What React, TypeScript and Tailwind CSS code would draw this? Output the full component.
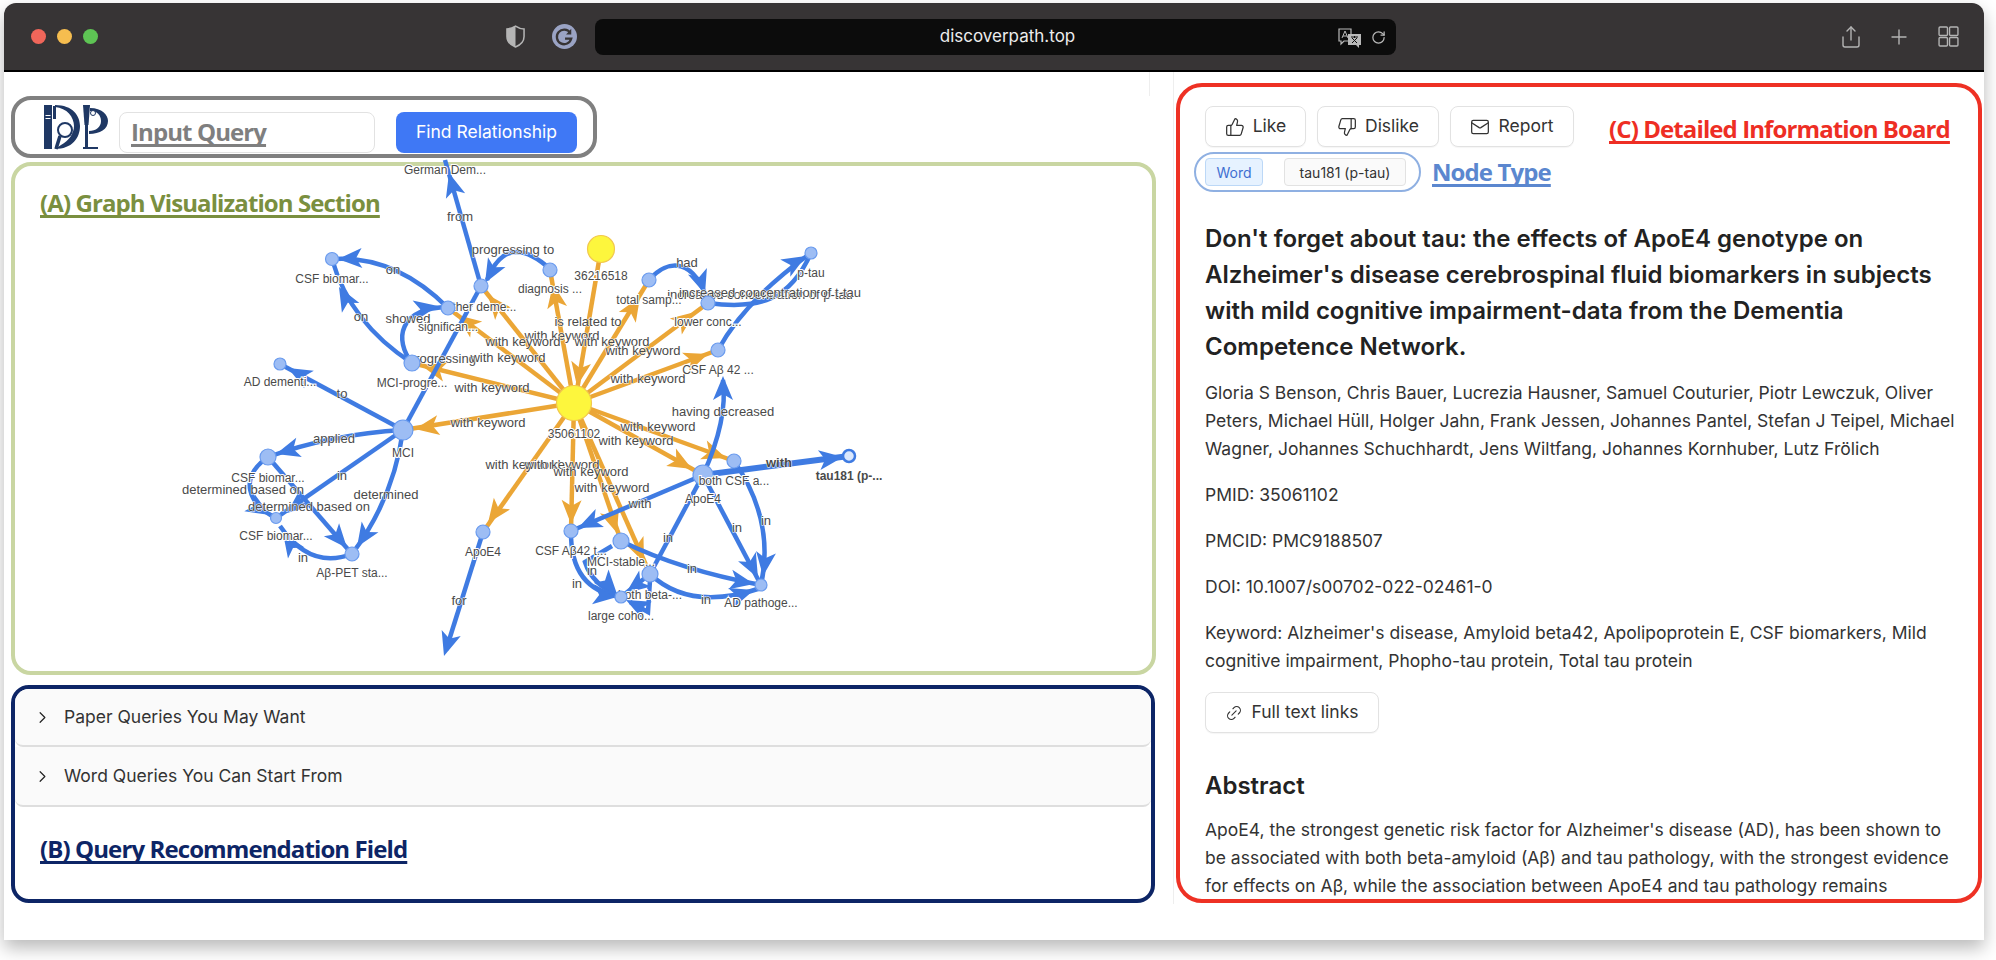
import React from 'react';
import { ChevronRight, Link2, Mail, Plus, RotateCw, Share, ThumbsDown, ThumbsUp } from 'lucide-react';

const BLUE = '#3f7be2';
const ORANGE = '#eba636';

type Pt = [number, number];

interface Edge {
    d: string;
    color: string;
    width?: number;
    // arrow tip and a point behind it, gives the direction
    tip?: Pt;
    from?: Pt;
}

const CENTER: Pt = [574, 403];

// orange "with keyword" spokes around the paper node
const spokes: { to: Pt; tip: Pt }[] = [
    { to: [481, 286], tip: [488, 295] },
    { to: [448, 308], tip: [457, 315] },
    { to: [412, 363], tip: [422, 366] },
    { to: [403, 430], tip: [415, 429] },
    { to: [550, 270], tip: [553, 284] },
    { to: [649, 280], tip: [640, 297] },
    { to: [708, 303], tip: [695, 312] },
    { to: [718, 350], tip: [708, 354] },
    { to: [703, 475], tip: [692, 469] },
    { to: [734, 461], tip: [726, 458] },
    { to: [483, 532], tip: [488, 523] },
    { to: [571, 531], tip: [571, 524] },
    { to: [621, 541], tip: [617, 533] },
    { to: [650, 574], tip: [644, 562] },
];

const edges: Edge[] = [
    ...spokes.map(s => ({ d: `M${CENTER[0]} ${CENTER[1]} L${s.to[0]} ${s.to[1]}`, color: ORANGE, tip: s.tip, from: CENTER })),
    { d: 'M601 249 L577 390', color: ORANGE, tip: [577, 386], from: [601, 249] },

    { d: 'M481 286 L445 160', color: BLUE, tip: [449, 173], from: [481, 286] },
    { d: 'M550 269 Q507 230 487 280', color: BLUE, tip: [485, 283], from: [499, 258] },
    { d: 'M448 308 Q396 256 335 259', color: BLUE, tip: [338, 259], from: [362, 258] },
    { d: 'M412 363 Q350 323 332 259', color: BLUE, tip: [339, 287], from: [349, 305] },
    { d: 'M412 363 C394 340 398 308 448 307', color: BLUE, tip: [438, 306], from: [416, 310] },
    { d: 'M403 430 L481 286', color: BLUE },
    { d: 'M403 430 L280 364', color: BLUE, tip: [288, 368], from: [310, 380] },
    { d: 'M403 430 Q332 434 268 457', color: BLUE, tip: [276, 454], from: [300, 447] },
    { d: 'M403 430 L276 518', color: BLUE, tip: [287, 513], from: [312, 493] },
    { d: 'M403 430 Q394 498 352 554', color: BLUE, tip: [357, 547], from: [370, 527] },
    { d: 'M268 457 L352 554', color: BLUE, tip: [347, 548], from: [330, 528] },
    { d: 'M268 457 C238 478 248 504 276 518', color: BLUE, tip: [270, 515], from: [250, 503] },
    { d: 'M352 554 Q310 570 280 526', color: BLUE, tip: [283, 533], from: [293, 548] },
    { d: 'M483 532 L446 650', color: BLUE, tip: [444, 656], from: [483, 532] },

    { d: 'M718 350 Q745 300 811 253', color: BLUE, tip: [806, 256], from: [782, 270] },
    { d: 'M708 303 C760 310 790 300 811 253', color: BLUE },
    { d: 'M649 280 C668 258 695 258 708 303', color: BLUE, tip: [705, 294], from: [697, 270] },
    { d: 'M703 475 Q728 420 723 380', color: BLUE, tip: [723, 376], from: [723, 394] },
    { d: 'M703 475 L849 456', color: BLUE, width: 6, tip: [843, 457], from: [812, 461] },
    { d: 'M703 475 L571 531', color: BLUE, tip: [578, 528], from: [602, 517] },
    { d: 'M703 475 L650 574', color: BLUE },
    { d: 'M703 475 L761 585', color: BLUE, tip: [758, 578], from: [744, 551] },
    { d: 'M734 461 Q775 520 761 585', color: BLUE, tip: [763, 576], from: [766, 552] },
    { d: 'M621 541 Q680 570 761 585', color: BLUE, tip: [754, 584], from: [728, 579] },
    { d: 'M650 574 Q690 612 761 588', color: BLUE, tip: [754, 590], from: [733, 597] },
    { d: 'M571 531 Q570 590 621 597', color: BLUE, tip: [617, 597], from: [591, 594] },
    { d: 'M612 546 L585 562 Q592 585 621 597', color: BLUE, tip: [617, 594], from: [601, 576] },
    { d: 'M650 574 L621 597', color: BLUE, tip: [626, 593], from: [642, 581] },
    { d: 'M650 580 L648 612 L630 602', color: BLUE, tip: [626, 600], from: [646, 610] },
];

const edgeLabels: [string, number, number, boolean?][] = [
    ['from', 460, 217],
    ['progressing to', 513, 250],
    ['on', 393, 270],
    ['on', 361, 317],
    ['showed', 408, 319],
    ['progressing', 442, 359],
    ['to', 342, 394],
    ['applied', 334, 439],
    ['in', 342, 476],
    ['determined', 386, 495],
    ['determined based on', 243, 490],
    ['determined based on', 309, 507],
    ['in', 303, 558],
    ['for', 459, 601],
    ['is related to', 588, 322],
    ['with keyword', 562, 336],
    ['with keyword', 523, 342],
    ['with keyword', 612, 342],
    ['with keyword', 643, 351],
    ['with keyword', 508, 358],
    ['with keyword', 648, 379],
    ['with keyword', 492, 388],
    ['with keyword', 488, 423],
    ['with keyword', 658, 427],
    ['with keyword', 636, 441],
    ['with keyword', 523, 465],
    ['with keyword', 562, 465],
    ['with keyword', 591, 472],
    ['with keyword', 612, 488],
    ['having decreased', 723, 412],
    ['had', 687, 263],
    ['increased concentration of p-tau', 760, 295],
    ['increased concentration of t-tau', 770, 293],
    ['with', 779, 463, true],
    ['with', 640, 504],
    ['in', 668, 538],
    ['in', 737, 528],
    ['in', 766, 521],
    ['in', 692, 569],
    ['in', 706, 600],
    ['in', 577, 584],
    ['in', 592, 571],
];

interface GraphNode {
    x: number;
    y: number;
    r: number;
    label: string;
    labelY: number;
    kind?: 'paper' | 'selected';
}

const nodes: GraphNode[] = [
    { x: 481, y: 286, r: 7, label: 'other deme...', labelY: 307 },
    { x: 448, y: 308, r: 7, label: 'significan...', labelY: 327 },
    { x: 332, y: 259, r: 6.5, label: 'CSF biomar...', labelY: 279 },
    { x: 550, y: 270, r: 7, label: 'diagnosis ...', labelY: 289 },
    { x: 412, y: 363, r: 8, label: 'MCI-progre...', labelY: 383 },
    { x: 280, y: 364, r: 6, label: 'AD dementi...', labelY: 382 },
    { x: 403, y: 430, r: 10, label: 'MCI', labelY: 453 },
    { x: 268, y: 457, r: 8, label: 'CSF biomar...', labelY: 478 },
    { x: 276, y: 518, r: 5.5, label: 'CSF biomar...', labelY: 536 },
    { x: 352, y: 554, r: 7, label: 'Aβ-PET sta...', labelY: 573 },
    { x: 483, y: 532, r: 7, label: 'ApoE4', labelY: 552 },
    { x: 445, y: 150, r: 0, label: 'German Dem...', labelY: 170 },
    { x: 601, y: 249, r: 13.5, label: '36216518', labelY: 276, kind: 'paper' },
    { x: 574, y: 403, r: 17.5, label: '35061102', labelY: 434, kind: 'paper' },
    { x: 649, y: 280, r: 7, label: 'total samp...', labelY: 300 },
    { x: 708, y: 303, r: 7, label: 'lower conc...', labelY: 322 },
    { x: 811, y: 253, r: 6, label: 'p-tau', labelY: 273 },
    { x: 718, y: 350, r: 7, label: 'CSF Aβ 42 ...', labelY: 370 },
    { x: 703, y: 475, r: 10, label: 'ApoE4', labelY: 499 },
    { x: 734, y: 461, r: 7, label: 'both CSF a...', labelY: 481 },
    { x: 571, y: 531, r: 7, label: 'CSF Aβ42 t...', labelY: 551 },
    { x: 621, y: 541, r: 8, label: 'MCI-stable...', labelY: 562 },
    { x: 650, y: 574, r: 8, label: 'both beta-...', labelY: 595 },
    { x: 621, y: 597, r: 6, label: 'large coho...', labelY: 616 },
    { x: 761, y: 585, r: 6, label: 'AD pathoge...', labelY: 603 },
    { x: 849, y: 456, r: 6, label: 'tau181 (p-...', labelY: 476, kind: 'selected' },
];

const Arrow: React.FC<{ tip: Pt; from: Pt; color: string }> = ({ tip, from, color }) => {
    const angle = (Math.atan2(tip[1] - from[1], tip[0] - from[0]) * 180) / Math.PI;
    return (
        <polygon
            points="0,0 -24,-10 -18,0 -24,10"
            fill={color}
            transform={`translate(${tip[0]} ${tip[1]}) rotate(${angle})`}
        />
    );
};

const Graph: React.FC = () => (
    <svg viewBox="15 166 1137 505" className="block w-[1137px] h-[505px] overflow-visible" style={{ fontFamily: '"Liberation Sans", Arial, sans-serif' }}>
        {edges.map((e, i) => (
            <g key={i}>
                <path d={e.d} fill="none" stroke={e.color} strokeWidth={e.width ?? 4.5} />
                {e.tip && e.from && <Arrow tip={e.tip} from={e.from} color={e.color} />}
            </g>
        ))}
        {edgeLabels.map(([text, x, y, bold], i) => (
            <text
                key={i}
                x={x}
                y={y + 4}
                textAnchor="middle"
                fontSize={13}
                fontWeight={bold ? 700 : 400}
                fill="#4a4a4a"
                stroke="#ffffff"
                strokeWidth={1}
                paintOrder="stroke"
            >
                {text}
            </text>
        ))}
        {nodes.map((n, i) => (
            <g key={i}>
                <text
                    x={n.x}
                    y={n.labelY + 4}
                    textAnchor="middle"
                    fontSize={12}
                    fontWeight={n.kind === 'selected' ? 700 : 400}
                    fill="#4a4a4a"
                    stroke="#ffffff"
                    strokeWidth={2}
                    paintOrder="stroke"
                >
                    {n.label}
                </text>
                {n.r > 0 && (
                    <circle
                        cx={n.x}
                        cy={n.y}
                        r={n.r}
                        fill={n.kind === 'paper' ? '#fdf63d' : n.kind === 'selected' ? '#dbe8fd' : '#9dbdf4'}
                        stroke={n.kind === 'paper' ? '#f2c84e' : n.kind === 'selected' ? BLUE : '#6a9bee'}
                        strokeWidth={n.kind === 'selected' ? 2.5 : 1.2}
                    />
                )}
            </g>
        ))}
    </svg>
);

const Logo: React.FC = () => (
    <svg viewBox="0 0 66 46" className="w-[66px] h-[46px] shrink-0 mb-[8px]">
        <rect x="1" y="0" width="8" height="44" fill="#1f3864" />
        <rect x="2.5" y="10" width="5" height="1" fill="#fff" />
        <rect x="2.5" y="13" width="5" height="1" fill="#fff" />
        <path d="M12 0 C30 0 37 11 37 21 C37 33 29 44 12 44 L18 40 C26 36 31 28 31 21 C31 12 24 3 12 2 Z" fill="#1f3864" />
        <path d="M10 1 H13 V14 H10 Z" fill="#1f3864" />
        <path d="M13 44 L17 31" stroke="#1f3864" strokeWidth="3.5" />
        <circle cx="22" cy="25" r="7" fill="#fff" stroke="#1f3864" strokeWidth="2" />
        <path d="M40 0 H47 L45.5 20 H41.5 Z" fill="#1f3864" />
        <rect x="42" y="20" width="3" height="23" fill="#1f3864" />
        <rect x="40" y="42" width="15" height="2" fill="#1f3864" />
        <path d="M47 3 C59 3 65 10 65 16 C65 24 57 29 46 29 V26 C53 26 58 22 58 16 C58 10 54 6 47 6 Z" fill="#1f3864" />
        <circle cx="50" cy="8" r="2.5" fill="#fff" stroke="#1f3864" strokeWidth="1" />
    </svg>
);

const TitleBar: React.FC = () => (
    <div className="relative flex items-center h-[69px] shrink-0 bg-[#373435] rounded-t-[12px] border-b-2 border-black">
        <div className="flex items-center gap-[11px] ml-[27px]">
            <span className="w-[15px] h-[15px] rounded-full bg-[#f0665a]" />
            <span className="w-[15px] h-[15px] rounded-full bg-[#f6bd4f]" />
            <span className="w-[15px] h-[15px] rounded-full bg-[#5ec454]" />
        </div>
        <svg viewBox="0 0 20 24" className="w-[19px] h-[23px] ml-[408px]">
            <path d="M10 1 C13 3 16 4 19 4 V12 C19 17 15 21 10 23 C5 21 1 17 1 12 V4 C4 4 7 3 10 1 Z" fill="none" stroke="#b5b5b5" strokeWidth="1.6" />
            <path d="M10 1 C7 3 4 4 1 4 V12 C1 17 5 21 10 23 Z" fill="#b5b5b5" />
        </svg>
        <svg viewBox="0 0 24 24" className="w-[25px] h-[25px] ml-[27px]">
            <circle cx="12" cy="12" r="12" fill="#9aa3c4" />
            <path d="M17.5 8.5 A7 7 0 1 0 18.5 14 H12.5" fill="none" stroke="#373435" strokeWidth="2.2" />
            <path d="M18.5 4.5 V10 H13.5 Z" fill="#373435" />
        </svg>
        <div className="relative flex items-center justify-center w-[801px] h-[36px] ml-[18px] pl-[24px] rounded-[8px] bg-[#0c0c0c]">
            <span className="text-[17px] text-[#ececec] font-['Inter',sans-serif]">discoverpath.top</span>
            <div className="absolute right-[10px] top-[8px] flex items-center gap-[8px] text-[#b9b9b9]">
                <svg viewBox="0 0 26 22" className="w-[26px] h-[22px]">
                    <path d="M2 2 H14 V14 H7 L4 17 V14 H2 Z" fill="none" stroke="#b9b9b9" strokeWidth="1.2" />
                    <path d="M11 7 H24 V18 H22 V21 L19 18 H11 Z" fill="#b9b9b9" />
                    <path d="M14 10 H21 M17.5 9 V11 M15 16 L20 11 M15 11 L20 16" stroke="#0c0c0c" strokeWidth="1" fill="none" />
                    <path d="M5 11 L8 4 L11 11 M6 9 H10" stroke="#b9b9b9" strokeWidth="1" fill="none" />
                </svg>
                <RotateCw size={15} />
            </div>
        </div>
        <div className="flex items-center ml-auto mr-[25px] text-[#b4b4b4]">
            <Share size={24} strokeWidth={1.4} />
            <Plus size={24} strokeWidth={1.4} className="ml-[24px]" />
            <svg viewBox="0 0 20 20" className="w-[21px] h-[21px] ml-[27px]" fill="none" stroke="#b4b4b4" strokeWidth="1.3">
                <rect x="1" y="1" width="8" height="8" rx="1" />
                <rect x="11" y="1" width="8" height="8" rx="1" />
                <rect x="1" y="11" width="8" height="8" rx="1" />
                <rect x="11" y="11" width="8" height="8" rx="1" />
            </svg>
        </div>
    </div>
);

const SearchBar: React.FC = () => (
    <div className="relative z-10 flex items-center w-[586px] h-[62px] ml-[7px] pl-[28px] pt-[10px] bg-white border-4 border-[#808080] rounded-[20px]">
        <Logo />
        <div className="flex items-center w-[256px] h-[41px] ml-[10px] pl-[11px] border border-[#e2e2e2] rounded-[8px] bg-white">
            <span className="text-[24px] font-bold underline decoration-[3px] underline-offset-[3px] [text-decoration-skip-ink:none] text-[#7f7f7f] tracking-[-0.9px] font-['Open_Sans',sans-serif]">Input Query</span>
        </div>
        <button className="w-[181px] h-[41px] ml-[21px] rounded-[8px] bg-[#3f78f5] text-[17.5px] text-white font-['Inter',sans-serif]">Find Relationship</button>
    </div>
);

const GraphSection: React.FC = () => (
    <div className="relative w-[1145px] h-[513px] ml-[7px] mt-[4px] bg-white border-4 border-[#c9d6a2] rounded-[20px]">
        <Graph />
        <h2 className="absolute left-[25px] top-[19px] text-[24px] font-bold underline decoration-[3px] underline-offset-[3px] [text-decoration-skip-ink:none] text-[#7a8f3f] tracking-[-0.9px] font-['Open_Sans',sans-serif]">(A) Graph Visualization Section</h2>
    </div>
);

const AccordionRow: React.FC<{ title: string; height: string }> = ({ title, height }) => (
    <div className={`flex items-center pl-[18px] bg-[#fafafa] border-b-2 border-[#dedede] rounded-b-[8px] font-['Inter',sans-serif] ${height}`}>
        <ChevronRight size={19} strokeWidth={1.5} className="text-[#222]" />
        <span className="ml-[12px] text-[17.5px] text-[#333]">{title}</span>
    </div>
);

const RecommendationSection: React.FC = () => (
    <div className="w-[1144px] h-[218px] ml-[7px] mt-[10px] bg-white border-4 border-[#0d2566] rounded-[18px] overflow-hidden">
        <AccordionRow title="Paper Queries You May Want" height="h-[58px]" />
        <AccordionRow title="Word Queries You Can Start From" height="h-[60px]" />
        <h2 className="ml-[25px] mt-[24px] text-[24px] font-bold underline decoration-[3px] underline-offset-[3px] [text-decoration-skip-ink:none] text-[#0d2566] tracking-[-0.9px] font-['Open_Sans',sans-serif]">(B) Query Recommendation Field</h2>
    </div>
);

const ActionButton: React.FC<{ width: string; children: React.ReactNode }> = ({ width, children }) => (
    <button className={`flex items-center justify-center gap-[8px] h-[41px] border border-[#e2e2e2] rounded-[8px] text-[17.5px] text-[#333] bg-white shadow-[0_1px_1px_rgba(0,0,0,0.04)] ${width}`}>
        {children}
    </button>
);

const InfoBoard: React.FC = () => (
    <div className="w-[806px] h-[820px] ml-[2px] mt-[11px] pl-[25px] pr-[25px] pt-[19px] bg-white border-4 border-[#ee3124] rounded-[26px] overflow-hidden font-['Inter',sans-serif] text-[#333]">
        <div className="flex items-center">
            <div className="flex gap-[11px]">
                <ActionButton width="w-[101px]"><ThumbsUp size={20} strokeWidth={1.5} />Like</ActionButton>
                <ActionButton width="w-[122px]"><ThumbsDown size={20} strokeWidth={1.5} />Dislike</ActionButton>
                <ActionButton width="w-[124px]"><Mail size={20} strokeWidth={1.5} />Report</ActionButton>
            </div>
            <h2 className="ml-[35px] mt-[5px] text-[24px] font-bold underline decoration-[3px] underline-offset-[3px] [text-decoration-skip-ink:none] text-[#ee2e24] tracking-[-0.9px] whitespace-nowrap font-['Open_Sans',sans-serif]">(C) Detailed Information Board</h2>
        </div>
        <div className="flex items-center mt-[5px] -ml-[11px]">
            <div className="flex items-center w-[227px] h-[40px] pl-[9px] border-2 border-[#8fb0e2] rounded-full">
                <span className="flex items-center justify-center w-[58px] h-[28px] bg-[#e6f2ff] border border-[#bcd8f7] rounded-[4px] text-[14px] text-[#3f6fd1]">Word</span>
                <span className="flex items-center justify-center w-[122px] h-[28px] ml-[21px] bg-[#fafafa] border border-[#e2e2e2] rounded-[4px] text-[14px] text-[#333]">tau181 (p-tau)</span>
            </div>
            <span className="ml-[11px] text-[24px] font-bold underline decoration-[3px] underline-offset-[3px] [text-decoration-skip-ink:none] text-[#5b87cf] tracking-[-0.9px] font-['Open_Sans',sans-serif]">Node Type</span>
        </div>
        <h1 className="mt-[29px] text-[24px] leading-[36px] font-semibold text-[#222]">
            Don't forget about tau: the effects of ApoE4 genotype on Alzheimer's disease cerebrospinal fluid biomarkers in subjects with mild cognitive impairment-data from the Dementia Competence Network.
        </h1>
        <p className="mt-[14px] text-[17.5px] leading-[28px] whitespace-nowrap">
            Gloria S Benson, Chris Bauer, Lucrezia Hausner, Samuel Couturier, Piotr Lewczuk, Oliver
            <br />
            Peters, Michael Hüll, Holger Jahn, Frank Jessen, Johannes Pantel, Stefan J Teipel, Michael
            <br />
            Wagner, Johannes Schuchhardt, Jens Wiltfang, Johannes Kornhuber, Lutz Frölich
        </p>
        <p className="mt-[18px] text-[17.5px] leading-[28px]">PMID: 35061102</p>
        <p className="mt-[18px] text-[17.5px] leading-[28px]">PMCID: PMC9188507</p>
        <p className="mt-[18px] text-[17.5px] leading-[28px]">DOI: 10.1007/s00702-022-02461-0</p>
        <p className="mt-[18px] text-[17.5px] leading-[28px]">
            Keyword: Alzheimer's disease, Amyloid beta42, Apolipoprotein E, CSF biomarkers, Mild cognitive impairment, Phopho-tau protein, Total tau protein
        </p>
        <div className="mt-[17px]">
            <ActionButton width="w-[174px]"><Link2 size={18} strokeWidth={1.5} className="-rotate-45" />Full text links</ActionButton>
        </div>
        <h2 className="mt-[35px] text-[24px] leading-[36px] font-semibold text-[#222]">Abstract</h2>
        <p className="mt-[12px] text-[17.5px] leading-[28px]">
            ApoE4, the strongest genetic risk factor for Alzheimer's disease (AD), has been shown to be associated with both beta-amyloid (Aβ) and tau pathology, with the strongest evidence for effects on Aβ, while the association between ApoE4 and tau pathology remains controversial and requires further study in larger cohorts of subjects.
        </p>
    </div>
);

export default function App() {
    return (
        <div className="w-[1996px] h-[960px] bg-white overflow-hidden pt-[3px] pl-[4px]">
            <div className="flex flex-col w-[1980px] h-[937px] bg-white rounded-t-[12px] shadow-[0_8px_18px_rgba(0,0,0,0.28)]">
                <TitleBar />
                <div className="flex flex-1 min-h-0">
                    <div className="w-[1169px] shrink-0">
                        <div className="h-[24px] w-[1146px] border-r border-[#eeeeee]" />
                        <SearchBar />
                        <GraphSection />
                        <RecommendationSection />
                    </div>
                    <div className="border-l border-[#eeeeee] h-[832px]">
                        <InfoBoard />
                    </div>
                </div>
            </div>
        </div>
    );
}
